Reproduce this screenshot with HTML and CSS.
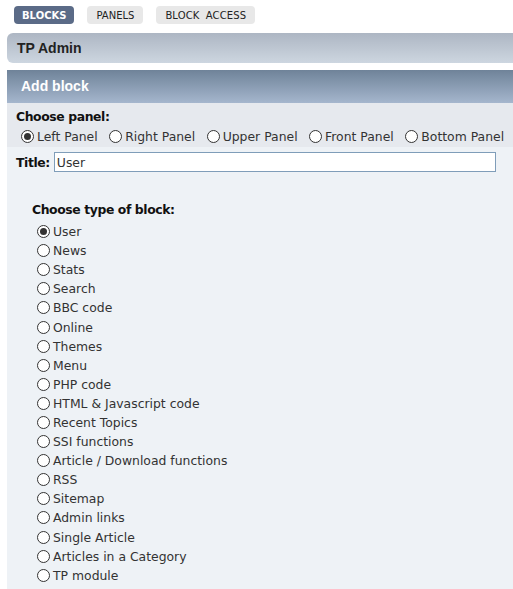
FILE: index.html
```html
<!DOCTYPE html>
<html>
<head>
<meta charset="utf-8">
<link rel="stylesheet" href="styles.css">
</head>
<body>
<div class="page">
  <nav class="tabs">
    <span class="tab active">BLOCKS</span>
    <span class="tab">PANELS</span>
    <span class="tab wide">BLOCK ACCESS</span>
  </nav>
  <div class="cat-bar">TP Admin</div>
  <div class="title-bar">Add block</div>
  <div class="panel-row">
    <div class="label">Choose panel:</div>
    <div class="panel-options">
      <label><input type="radio" name="panel" checked>Left Panel</label>
      <label><input type="radio" name="panel">Right Panel</label>
      <label><input type="radio" name="panel">Upper Panel</label>
      <label><input type="radio" name="panel">Front Panel</label>
      <label><input type="radio" name="panel">Bottom Panel</label>
    </div>
  </div>
  <div class="body-area">
    <div class="title-row">
      <span class="label">Title:</span>
      <input class="title-input" type="text" value="User">
    </div>
    <div class="types">
      <div class="label">Choose type of block:</div>
      <ul class="type-list">
        <li><label><input type="radio" name="type" checked>User</label></li>
        <li><label><input type="radio" name="type">News</label></li>
        <li><label><input type="radio" name="type">Stats</label></li>
        <li><label><input type="radio" name="type">Search</label></li>
        <li><label><input type="radio" name="type">BBC code</label></li>
        <li><label><input type="radio" name="type">Online</label></li>
        <li><label><input type="radio" name="type">Themes</label></li>
        <li><label><input type="radio" name="type">Menu</label></li>
        <li><label><input type="radio" name="type">PHP code</label></li>
        <li><label><input type="radio" name="type">HTML &amp; Javascript code</label></li>
        <li><label><input type="radio" name="type">Recent Topics</label></li>
        <li><label><input type="radio" name="type">SSI functions</label></li>
        <li><label><input type="radio" name="type">Article / Download functions</label></li>
        <li><label><input type="radio" name="type">RSS</label></li>
        <li><label><input type="radio" name="type">Sitemap</label></li>
        <li><label><input type="radio" name="type">Admin links</label></li>
        <li><label><input type="radio" name="type">Single Article</label></li>
        <li><label><input type="radio" name="type">Articles in a Category</label></li>
        <li><label><input type="radio" name="type">TP module</label></li>
      </ul>
    </div>
  </div>
</div>
</body>
</html>
```

FILE: styles.css
```css
html, body {
  margin: 0;
  padding: 0;
  background: #fff;
  overflow: hidden;
}
body {
  font-family: "DejaVu Sans", Verdana, sans-serif;
  font-size: 12.4px;
  color: #333;
}
.page {
  padding-left: 7px;
  width: 540px;
  height: 589px;
  overflow: hidden;
}
.tabs {
  display: flex;
  gap: 13px;
  padding: 6px 0 0 7px;
  height: 27px;
  box-sizing: border-box;
}
.tab {
  height: 18px;
  line-height: 19px;
  padding: 0 9px;
  border-radius: 4px;
  background: #e8e8e8;
  color: #222;
  font-size: 10px;
}
.tab.active {
  background: #5b6b87;
  color: #fff;
  font-weight: bold;
  padding: 0 8px;
}
.tab.wide {
  padding: 0 9px;
  word-spacing: 3px;
  letter-spacing: 0.12px;
}
.cat-bar {
  margin-top: 6px;
  height: 30px;
  line-height: 30px;
  padding-left: 10px;
  border-radius: 6px 0 0 6px;
  background: linear-gradient(#adb6c3, #cdd6e0);
  font-family: "Liberation Sans", Arial, sans-serif;
  font-weight: bold;
  font-size: 14px;
  color: #222;
}
.title-bar {
  margin-top: 7px;
  height: 33px;
  line-height: 33px;
  padding-left: 14px;
  background: linear-gradient(#6f8399, #a5b6cd);
  font-family: "Liberation Sans", Arial, sans-serif;
  font-weight: bold;
  font-size: 14px;
  color: #fff;
}
.label {
  font-weight: bold;
  color: #111;
  letter-spacing: -0.4px;
}
.panel-row {
  background: #e6e9ee;
  padding: 6px 0 2px 9px;
  height: 44px;
  box-sizing: border-box;
}
.panel-options {
  display: flex;
  gap: 11.5px;
  padding-left: 5px;
  margin-top: 5px;
}
label {
  display: inline-flex;
  align-items: center;
  white-space: nowrap;
}
input[type="radio"] {
  appearance: none;
  -webkit-appearance: none;
  width: 13px;
  height: 13px;
  margin: 0 3px 0 0;
  border: 1px solid #333;
  border-radius: 50%;
  background: #fff;
  box-sizing: border-box;
  position: relative;
  flex: none;
}
input[type="radio"]:checked::after {
  content: "";
  position: absolute;
  left: 2px;
  top: 2px;
  width: 7px;
  height: 7px;
  border-radius: 50%;
  background: #333;
}
.body-area {
  background: #eef2f6;
  padding: 5px 0 20px 9px;
  min-height: 460px;
}
.title-row {
  display: flex;
  align-items: center;
  gap: 4px;
}
.title-input {
  width: 442px;
  height: 20px;
  box-sizing: border-box;
  border: 1px solid #7f9db9;
  padding: 0 2px;
  font-family: "DejaVu Sans", Verdana, sans-serif;
  font-size: 12.4px;
  color: #333;
  background: #fff;
  outline: none;
}
.types {
  padding: 30px 0 0 16px;
}
.type-list {
  list-style: none;
  margin: 5px 0 0 5px;
  padding: 0;
}
.type-list li {
  height: 19.1px;
  display: flex;
  align-items: center;
}
```
